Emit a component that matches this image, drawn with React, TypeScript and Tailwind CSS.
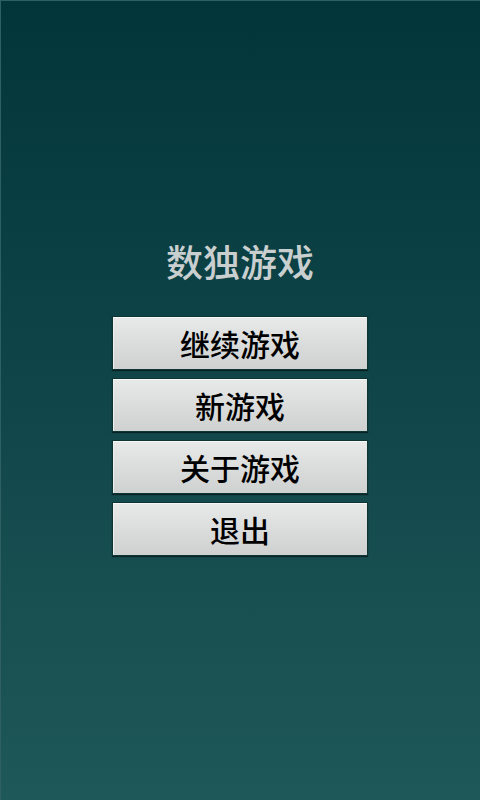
import React from "react";

const items = ["继续游戏", "新游戏", "关于游戏", "退出"];

export default function App() {
  return (
    <div
      className="w-[480px] h-[800px] overflow-hidden bg-gradient-to-b from-[#02353a] to-[#1f5859] flex flex-col items-center shadow-[inset_1px_1px_0_#2e6062]"
      style={{ fontFamily: '"Noto Sans CJK SC", "Noto Sans", sans-serif' }}
    >
      <div className="mt-[239px] text-[37px] leading-[44px] text-[#c9cfcf] font-medium">
        数独游戏
      </div>
      <div className="mt-[33px] flex flex-col gap-2">
        {items.map((t) => (
          <div
            key={t}
            className="w-[256px] h-[54px] flex items-center justify-center bg-gradient-to-b from-[#e8eaea] to-[#cfd1d1] border border-[#0f3434] shadow-[inset_0_1px_0_#f6f7f7,inset_1px_0_0_#eeefef,0_1px_1px_rgba(0,0,0,0.5)] text-[30px] leading-none text-black font-medium"
          >
            {t}
          </div>
        ))}
      </div>
    </div>
  );
}
